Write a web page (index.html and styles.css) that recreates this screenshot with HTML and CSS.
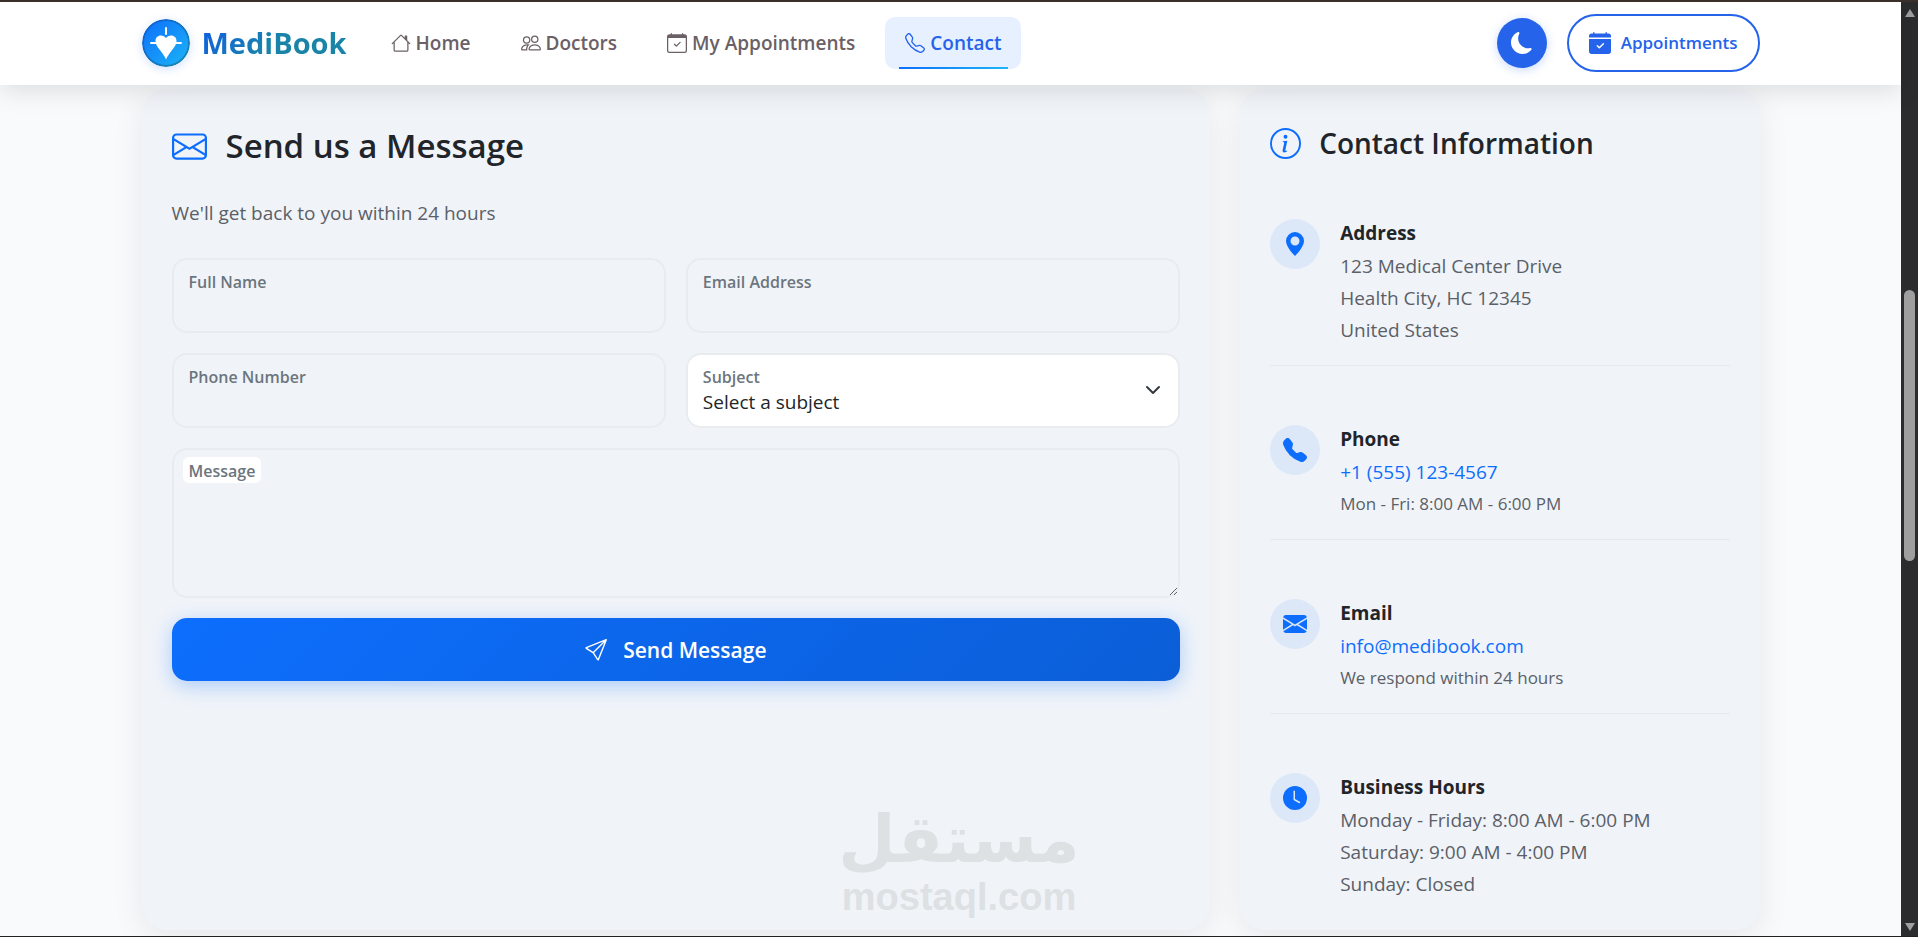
FILE: index.html
```html
<!DOCTYPE html>
<html lang="en">
<head>
<meta charset="utf-8">
<title>MediBook - Contact</title>
<meta name="viewport" content="width=device-width, initial-scale=1">
<link rel="stylesheet" href="styles.css">
</head>
<body>
<div class="viewport">
  <div class="page">
    <header class="header">
      <div class="container header-inner">
        <a class="brand" href="#">
          <svg class="brand-logo" viewBox="0 0 48 48" aria-hidden="true">
            <defs>
              <linearGradient id="logoFill" x1="0" y1="0" x2="1" y2="1"><stop offset="0" stop-color="#0d6efd"/><stop offset="1" stop-color="#1cb5f5"/></linearGradient>
              <linearGradient id="logoRing" x1="0" y1="0" x2="1" y2="1"><stop offset="0" stop-color="#0b5ed7"/><stop offset="1" stop-color="#1a8ab0"/></linearGradient>
            </defs>
            <circle cx="24" cy="24" r="23" fill="url(#logoFill)" stroke="url(#logoRing)" stroke-width="2"/>
            <path d="M24 40.500c-1-3-3.500-6-6.500-10-2.500-3.300-4-5.500-4-8.500 0-3.200 2.200-5.500 5.300-5.500 2.200 0 4.200 1.100 5.200 2.700 1-1.600 3-2.700 5.200-2.700 3.100 0 5.300 2.300 5.300 5.500 0 3-1.500 5.200-4 8.500-3 4-5.500 7-6.500 10Z" fill="#fff"/>
            <path d="M24 9v6M9 24h6M33 24h6" stroke="#fff" stroke-width="2" stroke-linecap="round"/>
          </svg>
          <span class="brand-name">MediBook</span>
        </a>
        <nav class="nav">
          <a class="nav-link" href="#"><svg class="icon" viewBox="0 0 16 16"><path d="M8.707 1.5a1 1 0 0 0-1.414 0L.646 8.146a.5.5 0 0 0 .708.708L2 8.207V13.5A1.500 1.500 0 0 0 3.500 15h9a1.500 1.500 0 0 0 1.500-1.500V8.207l.646.647a.5.5 0 0 0 .708-.708L13 5.793V2.500a.5.5 0 0 0-.5-.5h-1a.5.5 0 0 0-.5.5v1.293zM13 7.207V13.500a.5.5 0 0 1-.5.5h-9a.5.5 0 0 1-.5-.5V7.207l5-5z"/></svg>Home</a>
          <a class="nav-link" href="#"><svg class="icon" viewBox="0 0 16 16"><path d="M15 14s1 0 1-1-1-4-5-4-5 3-5 4 1 1 1 1zm-7.978-1L7 12.996c.001-.264.167-1.030.76-1.720C8.312 10.629 9.282 10 11 10c1.717 0 2.687.63 3.240 1.276.593.69.758 1.457.76 1.720l-.008.002-.014.002zM11 7a2 2 0 1 0 0-4 2 2 0 0 0 0 4m3-2a3 3 0 1 1-6 0 3 3 0 0 1 6 0M6.936 9.280a6 6 0 0 0-1.230-.247A7 7 0 0 0 5 9c-4 0-5 3-5 4q0 1 1 1h4.216A2.240 2.240 0 0 1 5 13c0-1.010.377-2.042 1.090-2.904.243-.294.526-.569.846-.816M4.920 10A5.500 5.500 0 0 0 4 13H1c0-.26.164-1.030.76-1.724.545-.636 1.492-1.256 3.160-1.275ZM1.500 5.500a3 3 0 1 1 6 0 3 3 0 0 1-6 0m3-2a2 2 0 1 0 0 4 2 2 0 0 0 0-4"/></svg>Doctors</a>
          <a class="nav-link" href="#"><svg class="icon" viewBox="0 0 16 16"><path d="M10.854 7.146a.5.5 0 0 1 0 .708l-3 3a.5.5 0 0 1-.708 0l-1.500-1.500a.5.5 0 1 1 .708-.708L7.500 9.793l2.646-2.647a.5.5 0 0 1 .708 0"/><path d="M3.500 0a.5.5 0 0 1 .5.5V1h8V.5a.5.5 0 0 1 1 0V1h1a2 2 0 0 1 2 2v11a2 2 0 0 1-2 2H2a2 2 0 0 1-2-2V3a2 2 0 0 1 2-2h1V.5a.5.5 0 0 1 .5-.5M1 4v10a1 1 0 0 0 1 1h12a1 1 0 0 0 1-1V4z"/></svg>My Appointments</a>
          <a class="nav-link nav-link-active" href="#" aria-current="page"><svg class="icon" viewBox="0 0 16 16"><path d="M3.654 1.328a.678.678 0 0 0-1.015-.063L1.605 2.300c-.483.484-.661 1.169-.45 1.770a17.600 17.600 0 0 0 4.168 6.608 17.600 17.600 0 0 0 6.608 4.168c.601.211 1.286.033 1.770-.45l1.034-1.034a.678.678 0 0 0-.063-1.015l-2.307-1.794a.68.68 0 0 0-.58-.122l-2.190.547a1.750 1.750 0 0 1-1.657-.459L5.482 8.062a1.750 1.750 0 0 1-.46-1.657l.548-2.190a.68.68 0 0 0-.122-.58zM1.884.511a1.745 1.745 0 0 1 2.612.163L6.290 2.980c.329.423.445.974.315 1.494l-.547 2.190a.68.68 0 0 0 .178.643l2.457 2.457a.68.68 0 0 0 .644.178l2.189-.547a1.750 1.750 0 0 1 1.494.315l2.306 1.794c.829.645.905 1.870.163 2.611l-1.034 1.034c-.74.74-1.846 1.065-2.877.702a18.600 18.600 0 0 1-7.010-4.420 18.600 18.600 0 0 1-4.420-7.009c-.362-1.030-.037-2.137.703-2.877z"/></svg>Contact</a>
        </nav>
        <div class="actions">
          <button class="theme-toggle" type="button" aria-label="Toggle dark mode"><svg class="icon-md" viewBox="0 0 16 16"><path d="M6 .278a.77.77 0 0 1 .08.858 7.200 7.200 0 0 0-.878 3.460c0 4.021 3.278 7.277 7.318 7.277q.792-.001 1.533-.16a.79.79 0 0 1 .81.316.73.73 0 0 1-.031.893A8.350 8.350 0 0 1 8.344 16C3.734 16 0 12.286 0 7.710 0 4.266 2.114 1.312 5.124.06A.75.75 0 0 1 6 .278"/></svg></button>
          <a class="pill" href="#"><svg class="icon-md" viewBox="0 0 16 16"><path d="M4 .5a.5.5 0 0 0-1 0V1H2a2 2 0 0 0-2 2v1h16V3a2 2 0 0 0-2-2h-1V.5a.5.5 0 0 0-1 0V1H4zM16 14V5H0v9a2 2 0 0 0 2 2h12a2 2 0 0 0 2-2m-5.146-5.146-3 3a.5.5 0 0 1-.708 0l-1.500-1.500a.5.5 0 0 1 .708-.708L7.500 10.793l2.646-2.647a.5.5 0 0 1 .708.708"/></svg>Appointments</a>
        </div>
      </div>
    </header>

    <main class="container content">
      <section class="card form-card">
        <h2 class="form-title"><svg class="title-icon-lg" viewBox="0 0 16 16"><path d="M0 4a2 2 0 0 1 2-2h12a2 2 0 0 1 2 2v8a2 2 0 0 1-2 2H2a2 2 0 0 1-2-2zm2-1a1 1 0 0 0-1 1v.217l7 4.200 7-4.200V4a1 1 0 0 0-1-1zm13 2.383-4.708 2.825L15 11.105zm-.034 6.876-5.640-3.471L8 9.583l-1.326-.795-5.640 3.470A1 1 0 0 0 2 13h12a1 1 0 0 0 .966-.741M1 11.105l4.708-2.897L1 5.383z"/></svg>Send us a Message</h2>
        <p class="form-lead">We'll get back to you within 24 hours</p>
        <form class="form">
          <div class="field"><input class="control" id="name" type="text"><label class="label" for="name">Full Name</label></div>
          <div class="field"><input class="control" id="email" type="email"><label class="label" for="email">Email Address</label></div>
          <div class="field"><input class="control" id="phone" type="tel"><label class="label" for="phone">Phone Number</label></div>
          <div class="field">
            <select class="control select" id="subject"><option>Select a subject</option></select>
            <label class="label" for="subject">Subject</label>
            <svg class="chevron" viewBox="0 0 16 16" aria-hidden="true"><path d="m2 5 6 6 6-6"/></svg>
          </div>
          <div class="field field-wide"><textarea class="control textarea" id="message"></textarea><label class="label label-chip" for="message">Message</label></div>
          <button class="submit" type="submit"><svg class="icon-md" viewBox="0 0 16 16"><path d="M15.854.146a.5.5 0 0 1 .11.54l-5.819 14.547a.75.75 0 0 1-1.329.124l-3.178-4.995L.643 7.184a.75.75 0 0 1 .124-1.330L15.314.037a.5.5 0 0 1 .54.11ZM6.636 10.070l2.761 4.338L14.130 2.576zm6.787-8.201L1.591 6.602l4.339 2.760z"/></svg>Send Message</button>
        </form>
      </section>

      <aside class="card info-card">
        <h3 class="info-title"><svg class="title-icon" viewBox="0 0 16 16"><path d="M8 15A7 7 0 1 1 8 1a7 7 0 0 1 0 14m0 1A8 8 0 1 0 8 0a8 8 0 0 0 0 16"/><path d="m8.930 6.588-2.290.287-.082.38.45.083c.294.07.352.176.288.469l-.738 3.468c-.194.897.105 1.319.808 1.319.545 0 1.178-.252 1.465-.598l.088-.416c-.2.176-.492.246-.686.246-.275 0-.375-.193-.304-.533zM9 4.500a1 1 0 1 1-2 0 1 1 0 0 1 2 0"/></svg>Contact Information</h3>
        <div class="info-list">
          <div class="info-item">
            <span class="badge"><svg class="icon-badge" viewBox="0 0 16 16"><path d="M8 16s6-5.686 6-10A6 6 0 0 0 2 6c0 4.314 6 10 6 10m0-7a3 3 0 1 1 0-6 3 3 0 0 1 0 6"/></svg></span>
            <div class="info-text"><h4>Address</h4><p>123 Medical Center Drive<br>Health City, HC 12345<br>United States</p></div>
          </div>
          <div class="info-item">
            <span class="badge"><svg class="icon-badge" viewBox="0 0 16 16"><path d="M1.885.511a1.745 1.745 0 0 1 2.610.163L6.290 2.980c.329.423.445.974.315 1.494l-.547 2.190a.68.68 0 0 0 .178.643l2.457 2.457a.68.68 0 0 0 .644.178l2.189-.547a1.750 1.750 0 0 1 1.494.315l2.306 1.794c.829.645.905 1.870.163 2.611l-1.034 1.034c-.74.74-1.846 1.065-2.877.702a18.600 18.600 0 0 1-7.010-4.420 18.600 18.600 0 0 1-4.420-7.009c-.362-1.030-.037-2.137.703-2.877z"/></svg></span>
            <div class="info-text"><h4>Phone</h4><p><a href="tel:+15551234567">+1 (555) 123-4567</a></p><p class="small">Mon - Fri: 8:00 AM - 6:00 PM</p></div>
          </div>
          <div class="info-item">
            <span class="badge"><svg class="icon-badge" viewBox="0 0 16 16"><path d="M.05 3.555A2 2 0 0 1 2 2h12a2 2 0 0 1 1.950 1.555L8 8.414zM0 4.697v7.104l5.803-3.558zM6.761 8.830l-6.570 4.027A2 2 0 0 0 2 14h12a2 2 0 0 0 1.808-1.144l-6.570-4.027L8 9.586zm3.436-.586L16 11.801V4.697z"/></svg></span>
            <div class="info-text"><h4>Email</h4><p><a href="mailto:info@medibook.com">info@medibook.com</a></p><p class="small">We respond within 24 hours</p></div>
          </div>
          <div class="info-item">
            <span class="badge"><svg class="icon-badge" viewBox="0 0 16 16"><path d="M16 8A8 8 0 1 1 0 8a8 8 0 0 1 16 0M8 3.500a.5.5 0 0 0-1 0V9a.5.5 0 0 0 .252.434l3.500 2a.5.5 0 0 0 .496-.868L8 8.710z"/></svg></span>
            <div class="info-text"><h4>Business Hours</h4><p>Monday - Friday: 8:00 AM - 6:00 PM<br>Saturday: 9:00 AM - 4:00 PM<br>Sunday: Closed</p></div>
          </div>
        </div>
      </aside>
    </main>
  </div>

  <div class="scrollbar" aria-hidden="true">
    <svg class="scroll-arrow" viewBox="0 0 12 10"><path d="M6 1 11 9H1Z"/></svg>
    <div class="scroll-track"><div class="scroll-thumb"></div></div>
    <svg class="scroll-arrow" viewBox="0 0 12 10"><path d="M6 9 11 1H1Z"/></svg>
  </div>

  <div class="watermark"><span class="watermark-ar" lang="ar" dir="rtl">مستقل</span><span class="watermark-en">mostaql.com</span></div>
</div>
</body>
</html>
```

FILE: styles.css
```css
* { box-sizing: border-box; }

body {
  margin: 0;
  background: #f8fafc;
  color: #212529;
  font-family: "Open Sans", "Noto Sans", sans-serif;
  font-size: 19px;
  line-height: 32px;
}

h2, h3, h4, p { margin: 0; }
a { color: #0d6efd; text-decoration: none; }
svg { fill: currentColor; flex: none; }

.viewport {
  position: relative;
  display: flex;
  height: 100vh;
  overflow: hidden;
  border-top: 2px solid #3b2f2a;
  border-bottom: 1px solid #1f2023;
}

.page { flex: 1; min-width: 0; }

.container { max-width: 1648px; margin: 0 auto; padding: 0 15px; }

.icon { width: 20px; height: 20px; }
.icon-md { width: 22px; height: 22px; }
.icon-badge { width: 24px; height: 24px; }

/* Header */
.header {
  position: relative;
  z-index: 2;
  background: #fff;
  box-shadow: 0 5px 25px rgba(0, 0, 0, 0.12);
}

.header-inner { display: flex; align-items: center; height: 83px; padding-bottom: 1px; }

.brand { display: flex; align-items: center; gap: 12px; }
.brand-logo { width: 48px; height: 48px; border-radius: 50%; box-shadow: 0 2px 10px rgba(37, 99, 235, 0.2); }
.brand-name {
  font-size: 29px;
  font-weight: 700;
  background: linear-gradient(135deg, #0d5ee5, #1a84a8 50%);
  background-clip: text;
  -webkit-background-clip: text;
  color: transparent;
}

.nav { display: flex; gap: 10px; margin-left: 24px; }
.nav-link {
  position: relative;
  display: flex;
  align-items: center;
  gap: 5px;
  padding: 10px 20px;
  border-radius: 10px;
  color: #6b6065;
  font-weight: 600;
}
.nav-link-active { background: #e7f0ff; color: #2563eb; }
.nav-link-active::after {
  content: "";
  position: absolute;
  right: 10%;
  bottom: 0;
  left: 10%;
  height: 2px;
  background: linear-gradient(90deg, #0d6efd, #1cb5f5);
}

.actions { display: flex; align-items: center; gap: 20px; margin-left: auto; }
.theme-toggle {
  display: grid;
  place-items: center;
  width: 50px;
  height: 50px;
  padding: 0;
  border: 0;
  border-radius: 50%;
  background: #2563eb;
  color: #fff;
  box-shadow: 0 2px 10px rgba(37, 99, 235, 0.25);
}
.pill {
  display: flex;
  align-items: center;
  gap: 10px;
  padding: 11px 20px;
  border: 2px solid #2563eb;
  border-radius: 30px;
  color: #2563eb;
  font-size: 17px;
  font-weight: 600;
}

/* Cards */
.content { display: grid; grid-template-columns: repeat(12, 1fr); gap: 30px; padding-top: 4px; }
.card {
  padding: 30px;
  border-radius: 25px;
  background: #f0f4f9;
  box-shadow: 0 8px 32px rgba(0, 0, 0, 0.08);
}
.form-card { grid-column: span 8; }
.info-card { grid-column: span 4; }

.form-title, .info-title { display: flex; align-items: center; font-weight: 600; }
.form-title { gap: 19px; font-size: 33px; line-height: 54px; }
.info-title { gap: 18px; font-size: 28px; line-height: 48px; }
.title-icon-lg { width: 35px; height: 35px; color: #0d6efd; }
.title-icon { width: 31px; height: 31px; color: #0d6efd; }

/* Form */
.form-lead { margin-top: 24px; color: #5b6068; }
.form { display: grid; grid-template-columns: 1fr 1fr; gap: 20px; margin-top: 29px; }
.field { position: relative; display: flex; }
.field-wide, .submit { grid-column: 1 / -1; }
.control {
  width: 100%;
  height: 75px;
  padding: 32px 16px 8px;
  border: 2px solid #e9ecef;
  border-radius: 15px;
  background: transparent;
  color: #212529;
  font: inherit;
}
.select { appearance: none; padding-top: 30px; padding-left: 15px; background: #fff; }
.textarea { height: 150px; resize: vertical; }
.label {
  position: absolute;
  top: 11px;
  left: 11px;
  padding: 0 6px;
  color: #6c757d;
  font-size: 16px;
  font-weight: 600;
  line-height: 26px;
  pointer-events: none;
}
.label-chip { top: 9px; padding-top: 2px; border-radius: 6px; background: #fff; line-height: 24px; }
.chevron {
  position: absolute;
  top: 29px;
  right: 19px;
  width: 16px;
  height: 16px;
  fill: none;
  stroke: #343a40;
  stroke-width: 2;
  stroke-linecap: round;
  stroke-linejoin: round;
  pointer-events: none;
}
.submit {
  display: flex;
  align-items: center;
  justify-content: center;
  gap: 16px;
  height: 63px;
  border: 0;
  border-radius: 15px;
  background: linear-gradient(135deg, #0d6efd, #0b5ed7);
  color: #fff;
  font: inherit;
  font-size: 21px;
  font-weight: 600;
  box-shadow: 0 5px 20px rgba(13, 110, 253, 0.3);
}

/* Contact information */
.info-list { margin-top: 52px; }
.info-item { display: flex; gap: 20px; padding-bottom: 19px; }
.info-item:last-child { padding-bottom: 0; }
.info-item + .info-item { padding-top: 59px; border-top: 1px solid #e6eaee; }
.badge {
  display: grid;
  place-items: center;
  flex: none;
  width: 50px;
  height: 50px;
  border-radius: 50%;
  background: #dce7f8;
  color: #0d6efd;
}
.info-text { color: #5b6068; }
.info-text h4 { margin-bottom: 3px; color: #212529; font-size: 19px; font-weight: 700; line-height: 28px; }
.small { font-size: 17px; }

/* Scrollbar */
.scrollbar {
  display: flex;
  flex-direction: column;
  align-items: center;
  width: 17px;
  padding: 6px 0 4px;
  background: #2b2c2e;
  color: #9f9f9f;
}
.scroll-arrow { width: 12px; height: 10px; }
.scroll-track { flex: 1; padding-top: 29vh; }
.scroll-thumb { width: 11px; height: 29vh; border-radius: 6px; background: #9f9f9f; }

/* Watermark */
.watermark {
  position: absolute;
  bottom: 17px;
  left: 50%;
  display: flex;
  flex-direction: column;
  align-items: center;
  transform: translateX(-50%);
  color: #dde1e4;
  font-weight: 700;
}
.watermark-ar { font-family: "DejaVu Sans", sans-serif; font-size: 66px; line-height: 70px; }
.watermark-en { font-family: "Liberation Sans", sans-serif; font-size: 38px; line-height: 44px; }
```
